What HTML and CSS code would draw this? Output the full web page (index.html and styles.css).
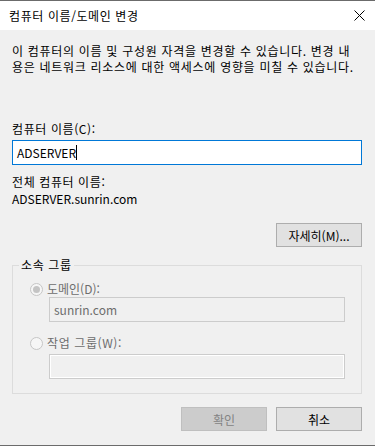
FILE: index.html
```html
<!DOCTYPE html>
<html lang="ko">
<head>
  <meta charset="UTF-8" />
  <meta name="viewport" content="width=device-width, initial-scale=1.0"/>
  <title>컴퓨터 이름/도메인 변경</title>
  <link rel="stylesheet" href="styles.css">
</head>
<body>
  <div class="window">
    <header class="titlebar">
      <span class="title ko">컴퓨터 이름/도메인 변경</span>
      <svg class="close" width="11" height="11" viewBox="0 0 11 11">
        <path d="M0.5 0.5 L10.5 10.5 M10.5 0.5 L0.5 10.5" stroke="#000" stroke-width="1" fill="none"/>
      </svg>
    </header>

    <main class="content">
      <p class="desc ko">
        <span class="line">이 컴퓨터의 이름 및 구성원 자격을 변경할 수 있습니다. 변경 내</span>
        <span class="line">용은 네트워크 리소스에 대한 액세스에 영향을 미칠 수 있습니다.</span>
      </p>

      <div class="label name-label ko">컴퓨터 이름(C):</div>
      <div class="edit focused">ADSERVER<span class="caret"></span></div>

      <div class="label full-label ko">전체 컴퓨터 이름:</div>
      <div class="label full-value">ADSERVER.sunrin.com</div>

      <div class="more-row">
        <button class="btn">자세히(M)...</button>
      </div>

      <fieldset class="group">
        <legend class="ko">소속 그룹</legend>

        <div class="radio-row first">
          <span class="radio checked disabled"></span>
          <span class="radio-label disabled">도메인(D):</span>
        </div>
        <div class="edit disabled sub">sunrin.com</div>

        <div class="radio-row second">
          <span class="radio disabled"></span>
          <span class="radio-label disabled ko">작업 그룹(W):</span>
        </div>
        <div class="edit disabled sub empty"></div>
      </fieldset>

      <div class="actions">
        <button class="btn" disabled>확인</button>
        <button class="btn">취소</button>
      </div>
    </main>
  </div>
</body>
</html>
```

FILE: styles.css
```css
html, body {
  margin: 0;
  padding: 0;
}
body {
  font-family: "Noto Sans CJK KR", "Noto Sans", sans-serif;
  font-size: 12px;
  line-height: 16px;
  color: #000;
  background: #f0f0f0;
}
.ko {
  letter-spacing: 0.6px;
}
.window {
  width: 375px;
  height: 446px;
  box-sizing: border-box;
  border-top: 1px solid #6b6b6b;
  border-bottom: 1px solid #6b6b6b;
  background: #f0f0f0;
  overflow: hidden;
}
.titlebar {
  height: 29px;
  background: #fff;
  display: flex;
  align-items: center;
  justify-content: space-between;
  padding: 0 10px 0 9px;
}
.title {
  font-size: 12px;
}
.close {
  display: block;
}
.content {
  padding: 0 13px 0 12px;
}
.desc {
  margin: 13px 0 0;
  letter-spacing: 0.7px;
}
.desc .line {
  display: block;
  white-space: nowrap;
}
.label {
  white-space: nowrap;
}
.name-label {
  margin-top: 46px;
}
.edit {
  box-sizing: border-box;
  height: 25px;
  border: 1px solid #0078d7;
  background: #fff;
  padding: 0 4px;
  line-height: 23px;
  display: flex;
  align-items: center;
}
.edit.focused {
  margin-top: 3px;
}
.caret {
  display: inline-block;
  width: 1px;
  height: 15px;
  background: #000;
}
.full-label {
  margin-top: 9px;
}
.full-value {
  margin-top: 1px;
}
.more-row {
  display: flex;
  justify-content: flex-end;
  margin-top: 16px;
}
.btn {
  width: 86px;
  height: 24px;
  box-sizing: border-box;
  border: 1px solid #adadad;
  background: #e1e1e1;
  font-family: inherit;
  font-size: 12px;
  color: #000;
  padding: 0;
}
.btn:disabled {
  background: #cccccc;
  border-color: #bfbfbf;
  color: #838383;
}
.group {
  margin: 10px 0 0;
  padding: 0 16px 14px 0;
  border: 1px solid #dcdcdc;
  min-width: 0;
}
.group legend {
  margin-left: 6px;
  padding: 0 2px;
  line-height: 16px;
}
.radio-row {
  display: flex;
  align-items: center;
  margin-left: 17px;
  height: 16px;
}
.radio-row.first {
  margin-top: 8px;
}
.radio-row.second {
  margin-top: 13px;
}
.radio {
  width: 13px;
  height: 13px;
  box-sizing: border-box;
  border-radius: 50%;
  border: 1px solid #bcbcbc;
  background: #fff;
  margin-right: 4px;
  display: flex;
  align-items: center;
  justify-content: center;
}
.radio.disabled {
  background: #f6f6f6;
  border-color: #c6c6c6;
}
.radio.checked::after {
  content: "";
  width: 7px;
  height: 7px;
  border-radius: 50%;
  background: #c4c4c4;
}
.radio-label.disabled {
  color: #6d6d6d;
}
.edit.disabled {
  border-color: #cccccc;
  background: #f0f0f0;
  color: #6d6d6d;
}
.edit.sub {
  margin-left: 36px;
}
.edit.empty {
  margin-top: 3px;
  box-shadow: inset 0 0 0 1px #fff;
}
.actions {
  display: flex;
  justify-content: flex-end;
  gap: 9px;
  margin-top: 13px;
}
```
